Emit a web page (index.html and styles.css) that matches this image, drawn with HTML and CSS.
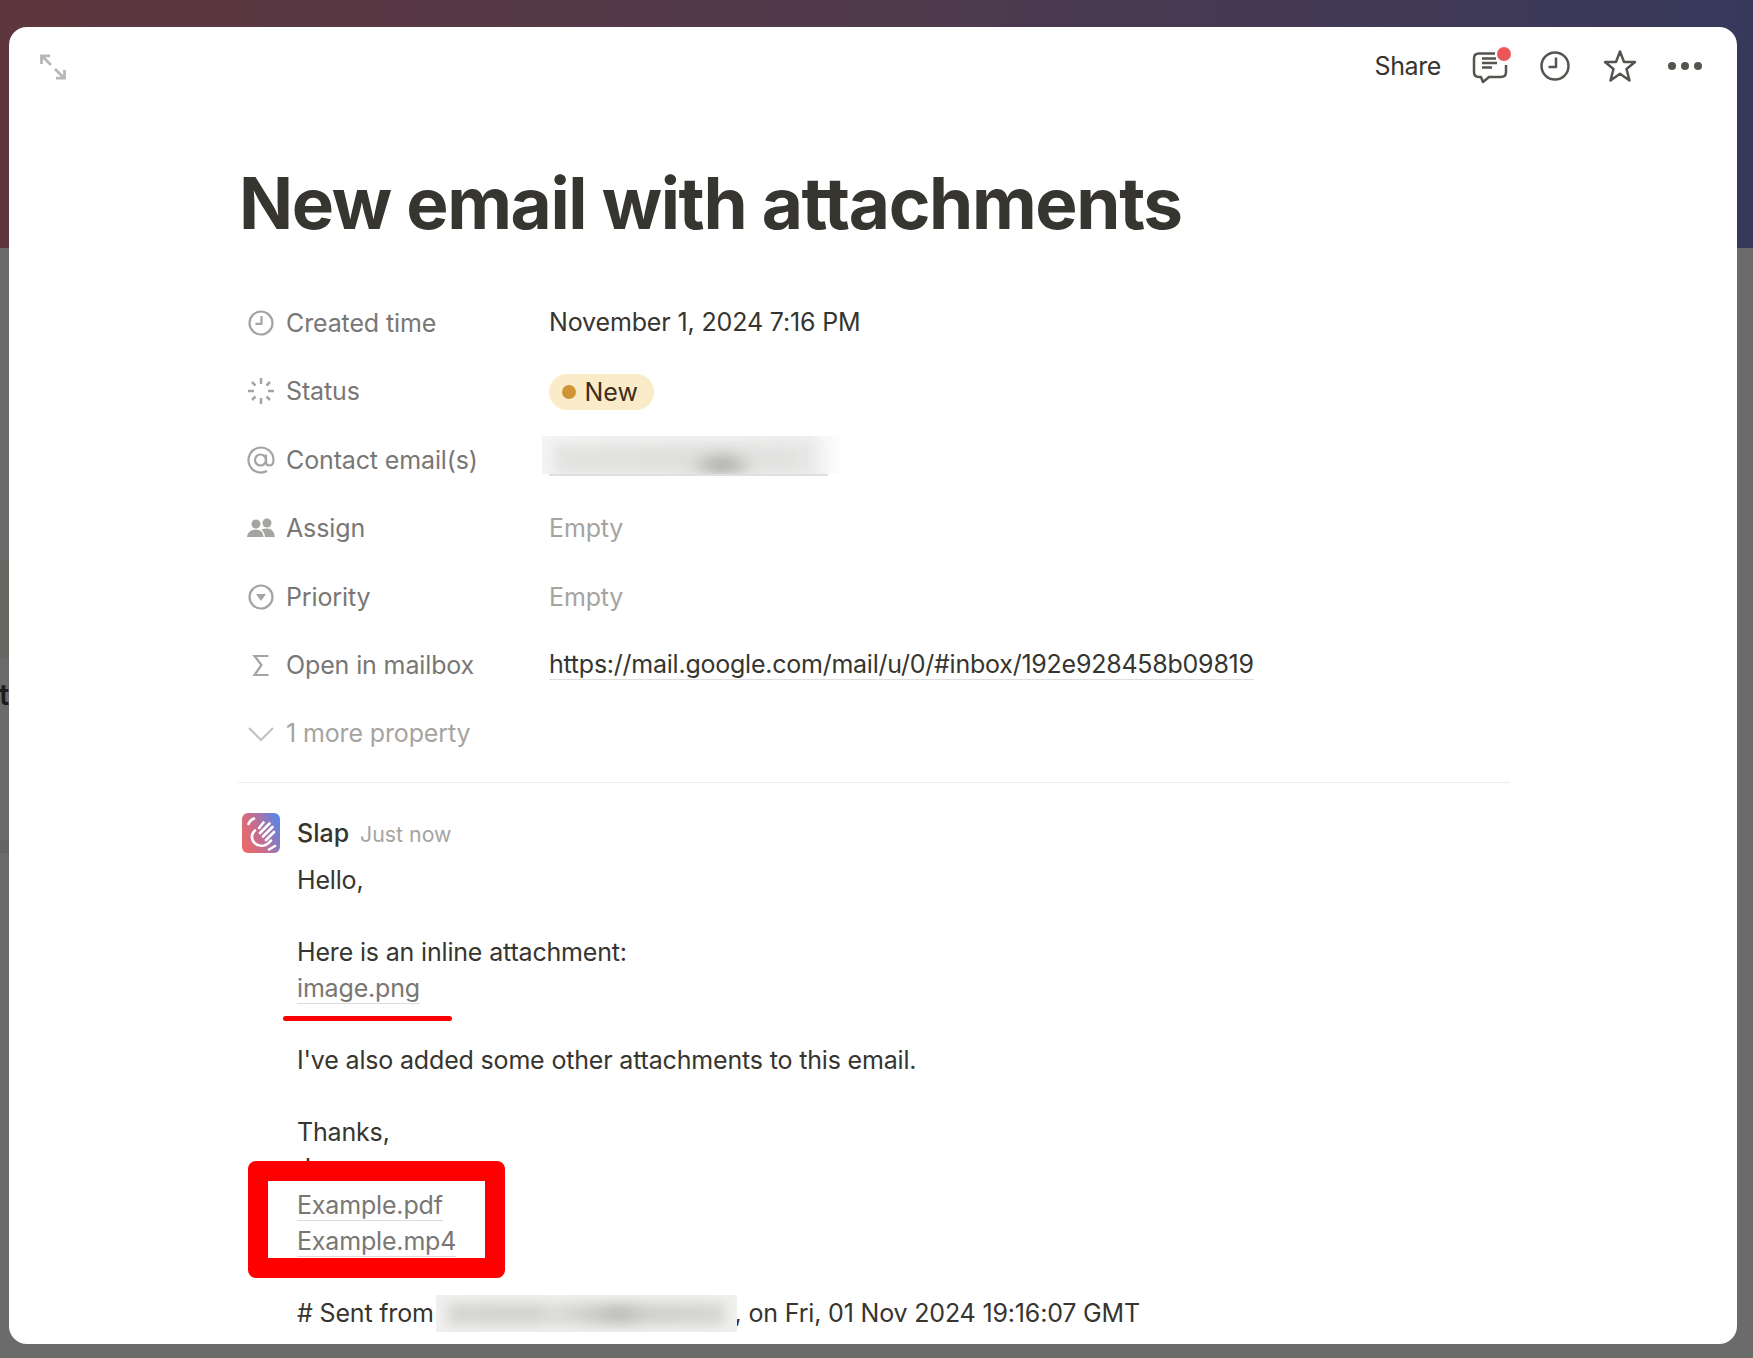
FILE: index.html
```html
<!DOCTYPE html>
<html lang="en">
<head>
<meta charset="utf-8">
<title>New email with attachments</title>
<link rel="stylesheet" href="styles.css">
</head>
<body>
<span class="behind-letter">t</span>
<main class="modal">
  <header class="topbar">
    <svg class="expand" viewBox="0 0 26 26" width="26" height="26"><path d="M1.500 10V1.800H10M2 2L11 11M24.500 16V24.200H16M24 24L15 15"/></svg>
    <div class="actions">
      <span class="share">Share</span>
      <span class="action-icon comment-icon">
        <svg viewBox="0 0 36 36" width="36" height="36"><path d="M23 3.500H7Q2 3.500 2 8.500V22Q2 27 7 27H9L11 32L17 27H29Q34 27 34 22V15"/><path d="M10 8.500H24M10 13H25M10 17.500H20"/></svg>
        <i class="dot"></i>
      </span>
      <span class="action-icon">
        <svg viewBox="0 0 32 32" width="32" height="32"><circle cx="16" cy="16" r="13.500"/><path d="M17 7.500V17H9.500"/></svg>
      </span>
      <span class="action-icon">
        <svg viewBox="0 0 34 34" width="34" height="34"><path d="M17 2.500L21 13H32L23.500 20L26.500 31.500L17 24.800L7.500 31.500L10.500 20L2 13H13Z"/></svg>
      </span>
      <span class="more-dots"><i></i><i></i><i></i></span>
    </div>
  </header>

  <section class="page">
    <h1 class="title">New email with attachments</h1>

    <div class="props">
      <div class="prop">
        <span class="prop-label">
          <svg class="ico" viewBox="-1 -1 28 28" width="28" height="28"><circle cx="13" cy="13" r="11.500"/><path d="M13.500 6V13.800H7.500"/></svg>
          Created time
        </span>
        <span class="prop-value date">November 1, 2024 7:16 PM</span>
      </div>
      <div class="prop">
        <span class="prop-label">
          <svg class="ico" viewBox="0 0 28 28" width="28" height="28"><path class="thick" d="M14 1V7M14 21V27M1 14H7M21 14H27M5 5L8.500 8.500M23 5L19.500 8.500M5 23L8.500 19.500M23 23L19.500 19.500"/></svg>
          Status
        </span>
        <span class="prop-value"><span class="pill"><i class="pill-dot"></i>New</span></span>
      </div>
      <div class="prop">
        <span class="prop-label">
          <svg class="ico" viewBox="0 0 28 28" width="28" height="28"><circle cx="13.500" cy="14" r="5.500"/><path d="M19 8.500V16Q19 19.500 22.500 19.500Q26.500 19.500 26.500 13.500A12.500 12.500 0 1 0 20 25"/></svg>
          Contact email(s)
        </span>
        <span class="prop-value">
          <span class="redact-email">
            <span class="redact-fill"><span class="smear"></span></span>
            <span class="redact-rule"></span>
          </span>
        </span>
      </div>
      <div class="prop">
        <span class="prop-label">
          <svg class="ico solid" viewBox="0 0 28 28" width="28" height="28"><circle cx="9" cy="10" r="4.500"/><circle cx="20" cy="9" r="4.500"/><path d="M0 23Q1 15.500 9 15.500Q13 15.500 15 18Q17 23 16.500 23ZM14.500 15.500Q17 14.500 20 14.500Q27 14.500 28 23H18Q18 19 14.500 15.500Z"/></svg>
          Assign
        </span>
        <span class="prop-value empty">Empty</span>
      </div>
      <div class="prop">
        <span class="prop-label">
          <svg class="ico" viewBox="-1 -1 28 28" width="28" height="28"><circle cx="13" cy="13" r="11.500"/><path class="fill" d="M8 10H18L13 17Z"/></svg>
          Priority
        </span>
        <span class="prop-value empty">Empty</span>
      </div>
      <div class="prop">
        <span class="prop-label">
          <svg class="ico" viewBox="-1 -1 28 28" width="28" height="28"><path d="M20.500 4H6.500L13.500 13L6.500 23H20.500"/></svg>
          Open in mailbox
        </span>
        <span class="prop-value url"><a class="link">https://mail.google.com/mail/u/0/#inbox/192e928458b09819</a></span>
      </div>
      <div class="prop more">
        <span class="prop-label">
          <svg class="ico" viewBox="-1 -1 28 28" width="28" height="28"><path d="M1 8L13 20L25 8"/></svg>
          1 more property
        </span>
      </div>
    </div>

    <hr class="divider">

    <article class="comment">
      <div class="avatar">
        <svg viewBox="0 0 38 40" width="38" height="40"><defs><linearGradient id="slap" x1="0" y1="0.700" x2="1" y2="0.300"><stop offset="0" stop-color="#ea6a68"/><stop offset="0.450" stop-color="#c56d90"/><stop offset="1" stop-color="#5a85e6"/></linearGradient></defs><rect width="38" height="40" rx="6" fill="url(#slap)"/><path d="M6.500 11Q8 7 12 5.500M17 15L21.500 9.500M18 20L27.500 10.500M21 23.500L30.500 14M24 27L32 19M13 17.500Q8 22 11 28Q15 34 22 32.500Q26 31.500 29 27.500M27 36.500L33 33" fill="none" stroke="#fff" stroke-width="2.600" stroke-linecap="round"/></svg>
      </div>
      <div class="comment-main">
        <div class="comment-head"><span class="author">Slap</span><span class="time">Just now</span></div>
        <div class="comment-body">
          <p>Hello,</p>
          <p>&nbsp;</p>
          <p>Here is an inline attachment:</p>
          <p><a class="file">image.png</a></p>
          <p>&nbsp;</p>
          <p>I've also added some other attachments to this email.</p>
          <p>&nbsp;</p>
          <p>Thanks,</p>
          <p>Jean</p>
          <p><a class="file">Example.pdf</a></p>
          <p><a class="file">Example.mp4</a></p>
          <p>&nbsp;</p>
          <p># Sent from <span class="redact-sender"><span class="smear"></span></span>, on Fri, 01 Nov 2024 19:16:07 GMT</p>
        </div>
      </div>
    </article>
  </section>

  <i class="mark-line"></i>
  <i class="mark-box"></i>
</main>
</body>
</html>
```
FILE: styles.css
```css
* { box-sizing: border-box; }
html, body { height: 100%; }
body {
  margin: 0;
  height: 1358px;
  overflow: hidden;
  position: relative;
  padding: 27px 16px 14px 9px;
  font-family: Inter, "Liberation Sans", sans-serif;
  background:
    linear-gradient(180deg, transparent 0, transparent 560px, #636361 560px, #666663 561px, #666663 657px, #616160 657px, transparent 658px, transparent 840px, #646464 840px, #646464 853px, transparent 853px) left top / 9px 100% no-repeat,
    linear-gradient(90deg, #5e363d 0%, #4f3a4c 50%, #37395c 100%) top / 100% 248px no-repeat,
    #6b6b6b;
  color: #37352f;
}
.behind-letter {
  position: absolute;
  left: -1px;
  top: 677px;
  font-size: 29px;
  font-weight: 600;
  color: #1d1d1b;
}
.modal {
  position: relative;
  height: 1317px;
  background: #fff;
  border-radius: 18px;
  overflow: hidden;
}
.topbar {
  display: flex;
  justify-content: space-between;
  align-items: center;
  height: 78px;
  padding: 0 35px 0 31px;
}
.expand { fill: none; stroke: #b7b7b5; stroke-width: 2.800; margin-top: 1px; }
.actions { display: flex; align-items: center; }
.share { font-size: 25px; letter-spacing: -0.400px; color: #37352f; margin-right: 16px; }
.action-icon { position: relative; display: flex; justify-content: center; width: 65px; }
.action-icon svg { fill: none; stroke: #55544f; stroke-width: 2.500; stroke-linejoin: round; }
.comment-icon { margin-top: 4px; }
.action-icon .dot { position: absolute; left: 40px; top: -3px; width: 14px; height: 14px; border-radius: 50%; background: #eb5757; }
.more-dots { display: flex; gap: 5px; margin-left: 16px; }
.more-dots i { width: 8px; height: 8px; border-radius: 50%; background: #55544f; }

.page { padding: 0 0 0 228px; width: 1501px; }
.title {
  margin: 58px 0 45px;
  font-size: 71px;
  line-height: 80px;
  font-weight: 700;
  letter-spacing: -1.350px;
  color: #37352f;
  padding-left: 2px;
}
.props { display: flex; flex-direction: column; }
.prop { display: flex; align-items: center; height: 68.400px; font-size: 25px; }
.prop-label { display: flex; align-items: center; width: 312px; color: #787774; padding: 1.600px 0 0 9.500px; gap: 11.500px; letter-spacing: -0.130px; }
.ico { flex: none; fill: none; stroke: #a5a4a1; stroke-width: 2.200; }
.ico.solid { fill: #a5a4a1; stroke: none; }
.ico .fill { fill: #a5a4a1; stroke: none; }
.ico .thick { stroke-width: 2.500; }
.prop-value { color: #37352f; }
.prop-value.date { letter-spacing: -0.140px; }
.prop-value.url { letter-spacing: -0.240px; }
.prop-value.empty { color: #a5a4a1; letter-spacing: -0.150px; padding-top: 1.600px; }
.prop.more .prop-label { color: #a5a4a1; }
.prop.more .ico { stroke: #c3c2c0; }
.link { border-bottom: 1.500px solid #dfdfde; }
.pill {
  display: inline-flex;
  align-items: center;
  height: 36px;
  margin-top: 2px;
  padding: 0 16px 0 13px;
  gap: 8.500px;
  border-radius: 18px;
  background: #fbecc9;
  color: #402c1b;
}
.pill-dot { width: 14px; height: 14px; border-radius: 50%; background: #cf9436; }
.redact-email {
  display: block;
  width: 302px;
  margin: -6px 0 0 -7px;
}
.redact-fill {
  display: block;
  height: 38px;
  overflow: hidden;
  background: linear-gradient(90deg, #f4f4f3 0%, #efefee 88%, #fff 100%);
}
.redact-rule {
  display: block;
  width: 279px;
  height: 1.500px;
  margin-left: 7px;
  background: #dfdfde;
}
.redact-email .smear {
  display: block;
  height: 30px;
  margin: 8px 0 0 12px;
  width: 270px;
  filter: blur(6px);
  background:
    radial-gradient(ellipse 34px 20px at 168px 24px, #a4a4a2, transparent),
    linear-gradient(90deg, #e3e3e2, #dfdfde 50%, #e3e3e2 90%, transparent);
}
.divider { margin: 15px 0 30px; border: 0; height: 1px; background: #ededec; width: 1273px; }

.comment { display: flex; gap: 17px; margin-left: 5px; }
.avatar { flex: none; width: 38px; height: 40px; }
.avatar svg { display: block; }
.comment-main { flex: 1; }
.comment-head { display: flex; align-items: baseline; gap: 11px; height: 40px; line-height: 40px; }
.author { font-size: 25px; font-weight: 500; }
.time { font-size: 21.300px; color: #a5a4a1; }
.comment-body { font-size: 25px; line-height: 36.100px; margin-top: 9px; color: #37352f; letter-spacing: -0.170px; }
.comment-body p { margin: 0; white-space: nowrap; }
.file { color: #787774; border-bottom: 1.500px solid #dcdcdb; }
.redact-sender {
  display: inline-block;
  width: 301px;
  height: 37px;
  vertical-align: -10px;
  overflow: hidden;
  background: #f0f0ef;
  margin-left: -5px;
  margin-right: -2px;
  position: relative;
}
.redact-sender .smear {
  display: block;
  height: 22px;
  margin: 8px 12px;
  filter: blur(6px);
  background: linear-gradient(90deg, #d6d6d4, #d2d2d0 30%, #dcdcda 38%, #d0d0ce 50%, #bdbdbb 62%, #d0d0ce 72%, #d6d6d4 100%);
}

.mark-line {
  position: absolute;
  left: 274px;
  top: 989px;
  width: 169px;
  height: 5px;
  border-radius: 3px;
  background: #f00;
}
.mark-box {
  position: absolute;
  left: 239px;
  top: 1134px;
  width: 257px;
  height: 117px;
  border: 20px solid #f00;
  border-radius: 8px;
  background: transparent;
}
```
